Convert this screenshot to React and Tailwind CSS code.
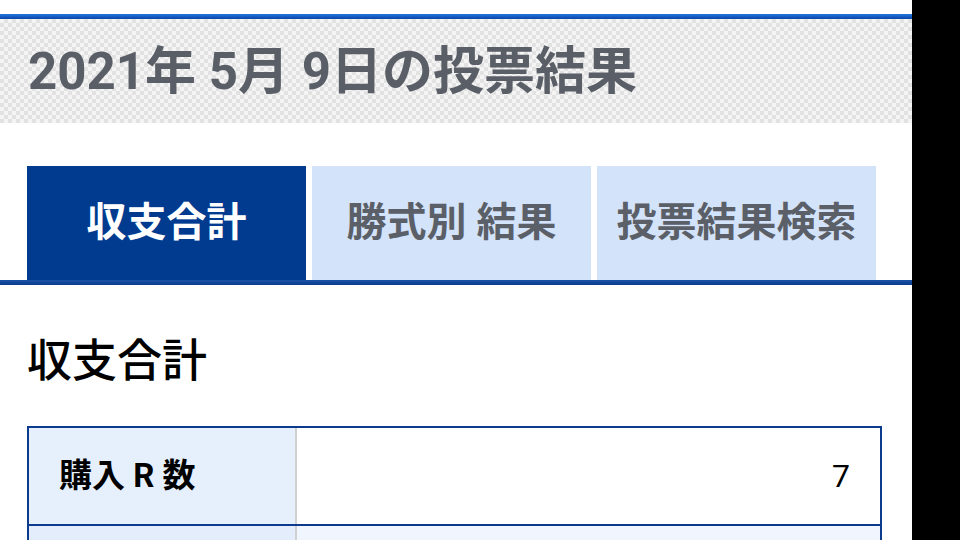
export default function App() {
  const font = "font-['Roboto','Noto_Sans_CJK_JP',sans-serif]";
  const tabs = [
    { label: "収支合計", active: true },
    { label: "勝式別 結果", active: false },
    { label: "投票結果検索", active: false },
  ];

  return (
    <div className={`flex w-[960px] h-[540px] bg-black overflow-hidden ${font}`}>
      <div className="w-[912px] h-full bg-white">
        <div className="h-[14px]" />
        <div className="h-[5px] bg-gradient-to-b from-[#2379e0] to-[#0b45a5]" />

        {/* title band */}
        <div className="h-[104px] flex items-center pl-[28px] bg-[repeating-conic-gradient(#e2e2e2_0%_25%,#f4f4f4_0%_50%)] bg-[length:8px_8px]">
          <h1 className="text-[51px] leading-none font-bold text-[#5a5f67]">
            2021年 5月 9日の投票結果
          </h1>
        </div>

        {/* tabs */}
        <div className="pt-[43px]">
          <div className="flex pl-[27px] gap-[6px] h-[114px]">
            {tabs.map((t) => (
              <div
                key={t.label}
                className={`w-[279px] flex items-center justify-center text-[40px] font-bold leading-none ${
                  t.active ? "bg-[#003b8f] text-white" : "bg-[#d3e3fa] text-[#5b6068]"
                }`}
              >
                {t.label}
              </div>
            ))}
          </div>
          <div className="h-[5px] bg-gradient-to-b from-[#1d54a8] to-[#0a3a8b]" />
        </div>

        {/* section */}
        <div className="px-[27px] pr-[30px]">
          <h2 className="mt-[54px] text-[45px] leading-none font-medium text-black">収支合計</h2>

          <div className="mt-[42px] border-2 border-[#0c3a8c]">
            <div className="flex h-[98px] border-b-2 border-[#0c3a8c]">
              <div className="w-[268px] bg-[#e6effc] border-r-2 border-[#d0d0d0] flex items-center pl-[30px] text-[33px] font-bold text-black">
                購入 R 数
              </div>
              <div className="flex-1 flex items-center justify-end pr-[30px] text-[32px] text-black">
                7
              </div>
            </div>
            <div className="flex h-[60px]">
              <div className="w-[268px] bg-[#e3edfc] border-r-2 border-[#d0d0d0]" />
              <div className="flex-1 bg-[#f1f6fe]" />
            </div>
          </div>
        </div>
      </div>
    </div>
  );
}
